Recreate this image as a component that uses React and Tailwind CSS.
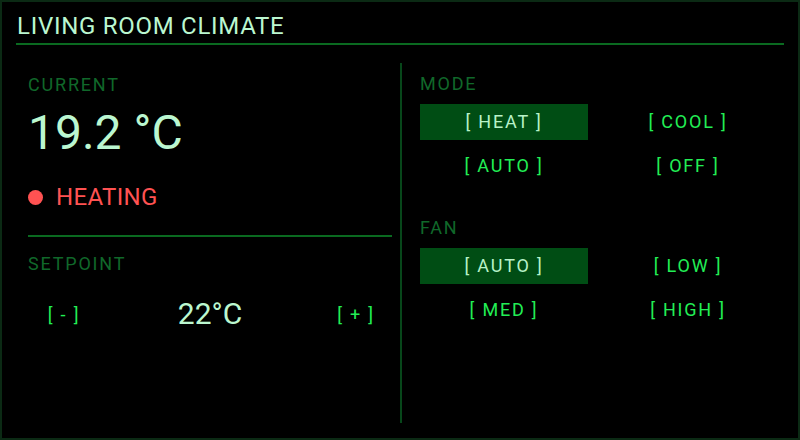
import { useState } from "react";

const MODES = ["HEAT", "COOL", "AUTO", "OFF"];
const FANS = ["AUTO", "LOW", "MED", "HIGH"];

function Choice({ label, active, onClick }) {
  return (
    <button
      onClick={onClick}
      className={`h-9 flex items-center justify-center text-[18px] leading-none tracking-widest ${
        active ? "bg-[#004d14] text-[#b8f2c8]" : "text-[#22ee55]"
      }`}
    >
      [ {label} ]
    </button>
  );
}

export default function App() {
  const [mode, setMode] = useState("HEAT");
  const [fan, setFan] = useState("AUTO");
  const [setpoint, setSetpoint] = useState(22);

  return (
    <div
      className="w-[800px] h-[440px] bg-black border-2 border-[#0b2a14] px-[14px] flex flex-col"
      style={{ fontFamily: "Roboto, 'Liberation Sans', sans-serif" }}
    >
      {/* HEADER */}
      <div className="pt-[10px] pb-[3px] border-b-2 border-[#0a6a20]">
        <h1 className="text-[24px] leading-[28px] pl-px tracking-[0.03em] text-[#bbf7d0]">
          LIVING ROOM CLIMATE
        </h1>
      </div>

      <div className="flex flex-1 mt-[18px] mb-[15px]">
        {/* LEFT — CURRENT + SETPOINT */}
        <div className="w-[384px] pl-3 pr-2 pt-[10px] flex flex-col">
          <div className="text-[18px] leading-6 tracking-widest text-[#10682a]">CURRENT</div>
          <div className="mt-3 text-[48px] leading-[48px] text-[#bbf7d0]">
            19.2 °C
          </div>
          <div className="mt-[26px] flex items-center gap-[13px] text-[24px] leading-7 tracking-[0.015em] text-[#ff5252]">
            <span className="w-[15px] h-[15px] rounded-full bg-[#ff5252]" />
            HEATING
          </div>
          <div className="mt-[24px] h-[2px] bg-[#0a6a20]" />
          <div className="mt-[15px] text-[18px] leading-6 tracking-widest text-[#10682a]">
            SETPOINT
          </div>
          <div className="mt-5 flex items-center justify-between">
            <button
              onClick={() => setSetpoint((v) => v - 1)}
              className="w-[72px] h-9 text-[18px] tracking-widest text-[#22ee55]"
            >
              [ - ]
            </button>
            <div className="text-[30px] leading-none text-[#bbf7d0]">
              {setpoint}°C
            </div>
            <button
              onClick={() => setSetpoint((v) => v + 1)}
              className="w-[72px] h-9 text-[18px] tracking-widest text-[#22ee55]"
            >
              [ + ]
            </button>
          </div>
        </div>

        {/* RIGHT — MODE + FAN */}
        <div className="flex-1 border-l-2 border-[#07471a] pl-[18px] pr-3 pt-[9px] flex flex-col">
          <div className="text-[18px] leading-6 tracking-widest text-[#10682a]">MODE</div>
          <div className="mt-2 grid grid-cols-2 gap-x-4 gap-y-2">
            {MODES.map((m) => (
              <Choice key={m} label={m} active={mode === m} onClick={() => setMode(m)} />
            ))}
          </div>
          <div className="mt-8 text-[18px] leading-6 tracking-widest text-[#10682a]">FAN</div>
          <div className="mt-2 grid grid-cols-2 gap-x-4 gap-y-2">
            {FANS.map((f) => (
              <Choice key={f} label={f} active={fan === f} onClick={() => setFan(f)} />
            ))}
          </div>
        </div>
      </div>
    </div>
  );
}
